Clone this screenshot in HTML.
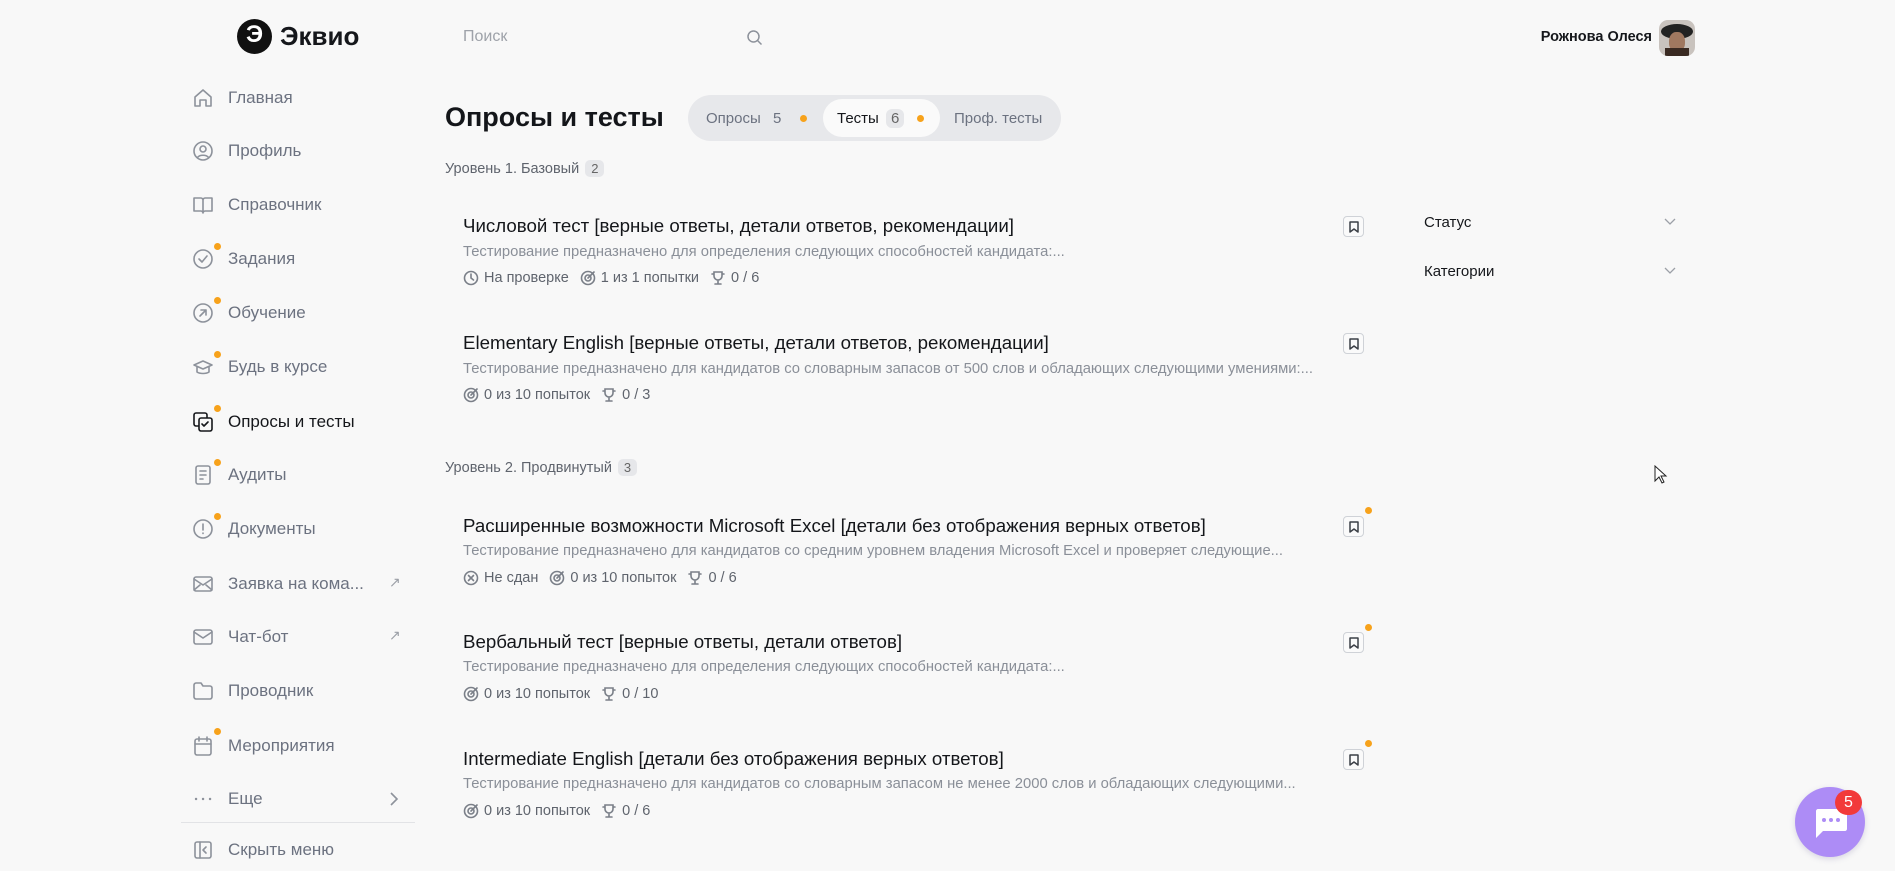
<!DOCTYPE html>
<html><head><meta charset="utf-8"><style>
*{margin:0;padding:0;box-sizing:border-box}
body{width:1895px;height:871px;background:#f8f8f8;font-family:"Liberation Sans",sans-serif;position:relative;overflow:hidden;color:#14161a}
.a{position:absolute;white-space:nowrap}
.nav{position:absolute;left:192px;display:flex;align-items:center;height:30px;font-size:17px;color:#6c7280}
.nav svg{width:22px;height:22px;margin-right:14px;stroke:#8d929b;fill:none;stroke-width:1.6;stroke-linecap:round;stroke-linejoin:round}
.dot{position:absolute;width:7px;height:7px;border-radius:50%;background:#f7a21b}
.t{font-size:18.7px;color:#14161a}
.d{font-size:14.8px;color:#8a8f98}
.m{font-size:14.5px;color:#5f646d;display:flex;align-items:center;gap:5px}
.m svg{width:16px;height:16px;stroke:#7a7f88;fill:none;stroke-width:1.6;stroke-linecap:round}
.m span{margin-right:6px}
.bm{position:absolute;left:1343px;width:21px;height:21px;border:1px solid #cfd2d7;border-radius:4px;background:#fafafa}
.bm svg{position:absolute;left:5px;top:4px}
.lv{font-size:14.5px;color:#5f646d;display:flex;align-items:center;gap:6px}
.cnt{background:#e6e7ea;border-radius:5px;padding:1px 6px;font-size:13px;color:#666}
</style></head><body>
<!-- logo -->
<div class="a" style="left:237px;top:19px;width:35px;height:35px;border-radius:50%;background:#111"></div>
<div class="a" style="left:246px;top:21px;color:#fff;font-weight:bold;font-size:24px">Э</div>
<div class="a" style="left:280px;top:21px;font-size:26px;font-weight:bold;color:#15171b">Эквио</div>
<div class="a" style="left:463px;top:28px;font-size:16px;color:#9ea2a9">Поиск</div>
<svg class="a" style="left:746px;top:29px" width="17" height="17" viewBox="0 0 17 17" fill="none" stroke="#8d929b" stroke-width="1.5"><circle cx="7.5" cy="7.5" r="5.5"/><path d="M11.5 11.5l4 4"/></svg>
<div class="a" style="left:1652px;top:29px;font-size:14.5px;font-weight:bold;color:#15171b;transform:translateX(-100%)">Рожнова Олеся</div>
<div class="a" style="left:1659px;top:20px;width:36px;height:36px;border-radius:9px;background:#c9c3be;overflow:hidden"><div style="position:absolute;left:2px;top:4px;width:32px;height:15px;border-radius:50%;background:#222"></div><div style="position:absolute;left:10px;top:12px;width:16px;height:20px;border-radius:45%;background:#a07860"></div><div style="position:absolute;left:6px;top:28px;width:24px;height:10px;background:#3a2a22"></div></div>

<!-- sidebar -->
<div class="nav" style="top:83px"><svg viewBox="0 0 22 22"><path d="M3 10l8-7 8 7v9h-5v-6h-6v6H3z"/></svg>Главная</div>
<div class="nav" style="top:136px"><svg viewBox="0 0 22 22"><circle cx="11" cy="11" r="9"/><circle cx="11" cy="9" r="3"/><path d="M5.5 17.5c2-3 9-3 11 0"/></svg>Профиль</div>
<div class="nav" style="top:190px"><svg viewBox="0 0 22 22"><path d="M2 4h7c1 0 2 1 2 2v13c0-1-1-2-2-2H2zM20 4h-7c-1 0-2 1-2 2v13c0-1 1-2 2-2h7z"/></svg>Справочник</div>
<div class="nav" style="top:244px"><svg viewBox="0 0 22 22"><circle cx="11" cy="11" r="9"/><path d="M7 11l3 3 5-6"/></svg>Задания</div>
<div class="nav" style="top:298px"><svg viewBox="0 0 22 22"><circle cx="11" cy="11" r="9"/><path d="M8 14l6-6M9 8h5v5"/></svg>Обучение</div>
<div class="nav" style="top:352px"><svg viewBox="0 0 22 22"><path d="M2 9l9-4 9 4-9 4z"/><path d="M5 11v5c3 2 9 2 12 0v-5"/></svg>Будь в курсе</div>
<div class="nav" style="top:407px;color:#15171b"><svg viewBox="0 0 22 22" style="stroke:#15171b"><rect x="2" y="2" width="13" height="13" rx="2"/><rect x="7" y="7" width="13" height="13" rx="2" fill="#f8f8f8"/><path d="M10 13l2 2 4-4"/></svg>Опросы и тесты</div>
<div class="nav" style="top:460px"><svg viewBox="0 0 22 22"><rect x="4" y="2" width="14" height="18" rx="2"/><path d="M8 7h6M8 11h6M8 15h3"/></svg>Аудиты</div>
<div class="nav" style="top:514px"><svg viewBox="0 0 22 22"><circle cx="11" cy="11" r="9"/><path d="M11 6v6M11 15v.5"/></svg>Документы</div>
<div class="nav" style="top:569px"><svg viewBox="0 0 22 22"><rect x="2" y="4" width="18" height="14" rx="2"/><path d="M2 6l9 6 9-6M2 17l6-5M20 17l-6-5"/></svg>Заявка на кома...</div>
<div class="nav" style="top:622px"><svg viewBox="0 0 22 22"><rect x="2" y="4" width="18" height="14" rx="2"/><path d="M2 6l9 6 9-6"/></svg>Чат-бот</div>
<div class="nav" style="top:676px"><svg viewBox="0 0 22 22"><path d="M2 5c0-1 1-2 2-2h5l2 3h7c1 0 2 1 2 2v9c0 1-1 2-2 2H4c-1 0-2-1-2-2z"/></svg>Проводник</div>
<div class="nav" style="top:731px"><svg viewBox="0 0 22 22"><rect x="3" y="4" width="16" height="16" rx="2"/><path d="M3 9h16M7 2v4M15 2v4"/></svg>Мероприятия</div>
<div class="nav" style="top:784px"><svg viewBox="0 0 22 22" style="stroke-width:2.4"><path d="M4 11h.1M11 11h.1M18 11h.1"/></svg>Еще</div>
<div class="a" style="left:181px;top:822px;width:234px;height:1px;background:#e2e3e6"></div>
<div class="nav" style="top:835px"><svg viewBox="0 0 22 22"><rect x="3" y="3" width="16" height="16" rx="2"/><path d="M8 3v16M14 8l-3 3 3 3"/></svg>Скрыть меню</div>
<div class="dot" style="left:214px;top:243px"></div><div class="dot" style="left:214px;top:297px"></div><div class="dot" style="left:214px;top:351px"></div><div class="dot" style="left:214px;top:405px"></div><div class="dot" style="left:214px;top:459px"></div><div class="dot" style="left:214px;top:513px"></div><div class="dot" style="left:214px;top:728px"></div>
<div class="a" style="left:389px;top:574px;color:#9ca0a7;font-size:14px">↗</div>
<div class="a" style="left:389px;top:627px;color:#9ca0a7;font-size:14px">↗</div>
<svg class="a" style="left:388px;top:791px" width="12" height="16" viewBox="0 0 12 16" fill="none" stroke="#8d929b" stroke-width="1.6"><path d="M3 2l6 6-6 6"/></svg>

<!-- header -->
<div class="a" style="left:445px;top:102px;font-size:27px;font-weight:bold;color:#14161a">Опросы и тесты</div>
<div class="a" style="left:688px;top:95px;width:373px;height:46px;border-radius:23px;background:#e7e8eb"></div>
<div class="a" style="left:823px;top:99px;width:117px;height:38px;border-radius:19px;background:#fafafa"></div>
<div class="a" style="left:706px;top:110px;font-size:15px;color:#6c7280">Опросы <span style="margin-left:8px">5</span></div>
<div class="dot" style="left:800px;top:115px"></div>
<div class="a" style="left:837px;top:110px;font-size:15px;color:#15171b">Тесты <span style="background:#e6e7ea;border-radius:6px;padding:1px 5px;color:#666;margin-left:3px">6</span></div>
<div class="dot" style="left:917px;top:115px"></div>
<div class="a" style="left:954px;top:110px;font-size:15px;color:#6c7280">Проф. тесты</div>

<div class="a lv" style="left:445px;top:160px">Уровень 1. Базовый <span class="cnt">2</span></div>
<div class="a lv" style="left:445px;top:459px">Уровень 2. Продвинутый <span class="cnt">3</span></div>

<!-- items -->
<div class="a t" style="left:463px;top:215px">Числовой тест [верные ответы, детали ответов, рекомендации]</div>
<div class="a d" style="left:463px;top:244px">Тестирование предназначено для определения следующих способностей кандидата:...</div>
<div class="a m" style="left:463px;top:270px"><svg viewBox="0 0 16 16"><circle cx="8" cy="8" r="6.5"/><path d="M8 4v4l2.5 2"/></svg><span>На проверке</span><svg viewBox="0 0 16 16"><circle cx="8" cy="8" r="6.5"/><circle cx="8" cy="8" r="3"/><path d="M8 8l6-6"/></svg><span>1 из 1 попытки</span><svg viewBox="0 0 16 16"><path d="M4 2h8v4a4 4 0 01-8 0zM8 10v4M5 14h6M4 4H2M12 4h2"/></svg><span>0 / 6</span></div>
<div class="bm" style="top:216px"><svg width="10" height="12" viewBox="0 0 10 12" fill="none" stroke="#3b3f46" stroke-width="1.5" stroke-linejoin="round"><path d="M1 1h8v10L5 8l-4 3z"/></svg></div>

<div class="a t" style="left:463px;top:332px">Elementary English [верные ответы, детали ответов, рекомендации]</div>
<div class="a d" style="left:463px;top:361px">Тестирование предназначено для кандидатов со словарным запасов от 500 слов и обладающих следующими умениями:...</div>
<div class="a m" style="left:463px;top:387px"><svg viewBox="0 0 16 16"><circle cx="8" cy="8" r="6.5"/><circle cx="8" cy="8" r="3"/><path d="M8 8l6-6"/></svg><span>0 из 10 попыток</span><svg viewBox="0 0 16 16"><path d="M4 2h8v4a4 4 0 01-8 0zM8 10v4M5 14h6M4 4H2M12 4h2"/></svg><span>0 / 3</span></div>
<div class="bm" style="top:333px"><svg width="10" height="12" viewBox="0 0 10 12" fill="none" stroke="#3b3f46" stroke-width="1.5" stroke-linejoin="round"><path d="M1 1h8v10L5 8l-4 3z"/></svg></div>

<div class="a t" style="left:463px;top:515px">Расширенные возможности Microsoft Excel [детали без отображения верных ответов]</div>
<div class="a d" style="left:463px;top:543px">Тестирование предназначено для кандидатов со средним уровнем владения Microsoft Excel и проверяет следующие...</div>
<div class="a m" style="left:463px;top:570px"><svg viewBox="0 0 16 16"><circle cx="8" cy="8" r="6.5"/><path d="M5.5 5.5l5 5M10.5 5.5l-5 5"/></svg><span>Не сдан</span><svg viewBox="0 0 16 16"><circle cx="8" cy="8" r="6.5"/><circle cx="8" cy="8" r="3"/><path d="M8 8l6-6"/></svg><span>0 из 10 попыток</span><svg viewBox="0 0 16 16"><path d="M4 2h8v4a4 4 0 01-8 0zM8 10v4M5 14h6M4 4H2M12 4h2"/></svg><span>0 / 6</span></div>
<div class="bm" style="top:516px"><svg width="10" height="12" viewBox="0 0 10 12" fill="none" stroke="#3b3f46" stroke-width="1.5" stroke-linejoin="round"><path d="M1 1h8v10L5 8l-4 3z"/></svg></div><div class="dot" style="left:1365px;top:507px"></div>

<div class="a t" style="left:463px;top:631px">Вербальный тест [верные ответы, детали ответов]</div>
<div class="a d" style="left:463px;top:659px">Тестирование предназначено для определения следующих способностей кандидата:...</div>
<div class="a m" style="left:463px;top:686px"><svg viewBox="0 0 16 16"><circle cx="8" cy="8" r="6.5"/><circle cx="8" cy="8" r="3"/><path d="M8 8l6-6"/></svg><span>0 из 10 попыток</span><svg viewBox="0 0 16 16"><path d="M4 2h8v4a4 4 0 01-8 0zM8 10v4M5 14h6M4 4H2M12 4h2"/></svg><span>0 / 10</span></div>
<div class="bm" style="top:632px"><svg width="10" height="12" viewBox="0 0 10 12" fill="none" stroke="#3b3f46" stroke-width="1.5" stroke-linejoin="round"><path d="M1 1h8v10L5 8l-4 3z"/></svg></div><div class="dot" style="left:1365px;top:624px"></div>

<div class="a t" style="left:463px;top:748px">Intermediate English [детали без отображения верных ответов]</div>
<div class="a d" style="left:463px;top:776px">Тестирование предназначено для кандидатов со словарным запасом не менее 2000 слов и обладающих следующими...</div>
<div class="a m" style="left:463px;top:803px"><svg viewBox="0 0 16 16"><circle cx="8" cy="8" r="6.5"/><circle cx="8" cy="8" r="3"/><path d="M8 8l6-6"/></svg><span>0 из 10 попыток</span><svg viewBox="0 0 16 16"><path d="M4 2h8v4a4 4 0 01-8 0zM8 10v4M5 14h6M4 4H2M12 4h2"/></svg><span>0 / 6</span></div>
<div class="bm" style="top:749px"><svg width="10" height="12" viewBox="0 0 10 12" fill="none" stroke="#3b3f46" stroke-width="1.5" stroke-linejoin="round"><path d="M1 1h8v10L5 8l-4 3z"/></svg></div><div class="dot" style="left:1365px;top:740px"></div>

<!-- filters -->
<div class="a" style="left:1424px;top:214px;font-size:15px;color:#15171b">Статус</div>
<div class="a" style="left:1424px;top:263px;font-size:15px;color:#15171b">Категории</div>
<svg class="a" style="left:1664px;top:218px" width="12" height="7" viewBox="0 0 12 7" fill="none" stroke="#9ca0a7" stroke-width="1.3"><path d="M1 1l5 5 5-5"/></svg>
<svg class="a" style="left:1664px;top:267px" width="12" height="7" viewBox="0 0 12 7" fill="none" stroke="#9ca0a7" stroke-width="1.3"><path d="M1 1l5 5 5-5"/></svg>

<!-- cursor -->
<svg class="a" style="left:1654px;top:465px" width="14" height="20" viewBox="0 0 14 20"><path d="M1 1v15l4-4 3 6 2-1-3-6h5z" fill="#fff" stroke="#222" stroke-width="1"/></svg>

<!-- chat -->
<div class="a" style="left:1795px;top:787px;width:70px;height:70px;border-radius:50%;background:#ad8cf6;box-shadow:0 2px 6px rgba(120,110,160,.25)"></div>
<svg class="a" style="left:1813px;top:807px" width="35" height="32" viewBox="0 0 35 32"><path d="M3 2h29c1 0 2 1 2 2v18c0 1-1 2-2 2H10l-7 7V4c0-1 1-2 2-2z" fill="#fff"/><circle cx="11" cy="13" r="2" fill="#ad8cf6"/><circle cx="18" cy="13" r="2" fill="#ad8cf6"/><circle cx="25" cy="13" r="2" fill="#ad8cf6"/></svg>
<div class="a" style="left:1835px;top:790px;width:27px;height:25px;border-radius:13px;background:#f23a3a;color:#fff;font-size:16px;text-align:center;line-height:25px">5</div>
</body></html>
